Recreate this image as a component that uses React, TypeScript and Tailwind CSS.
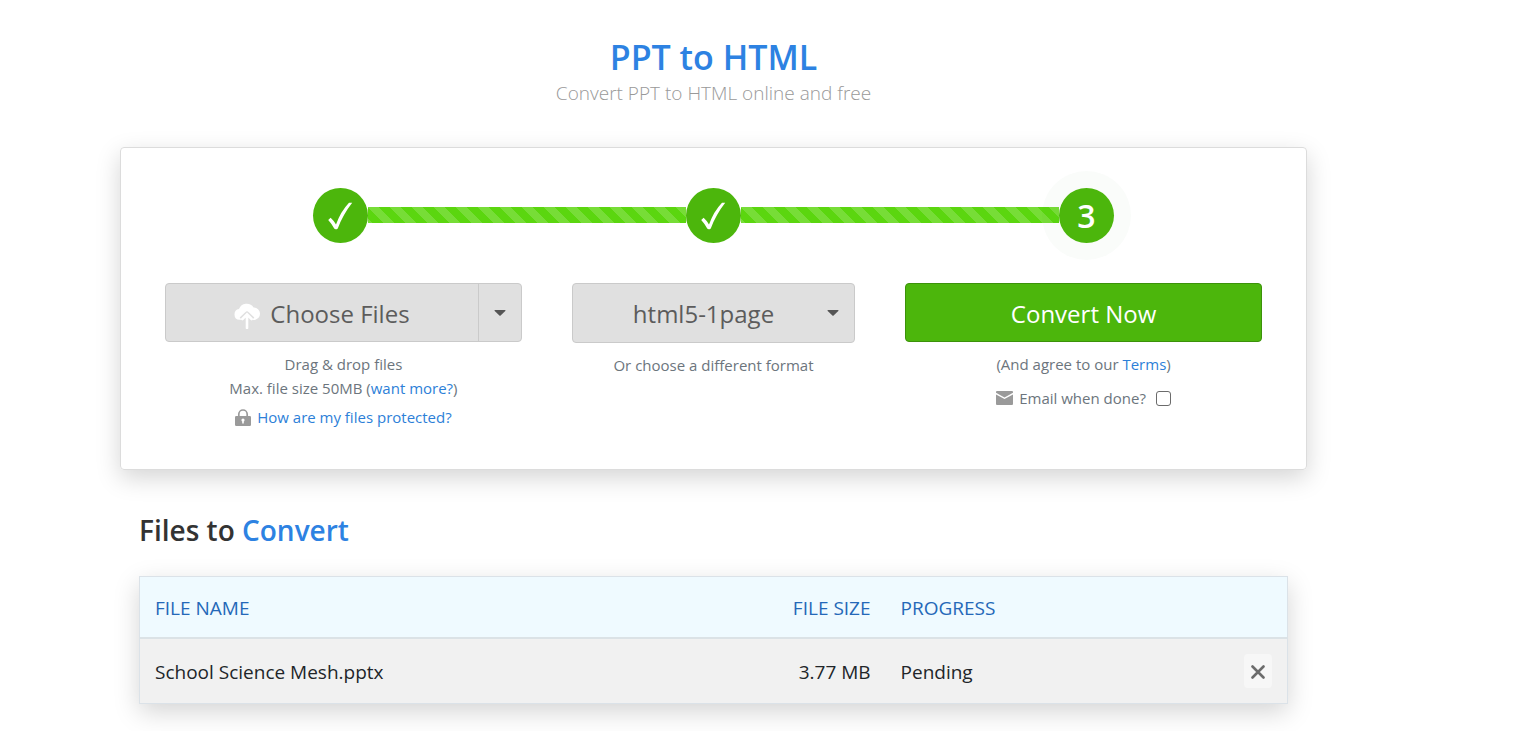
import { useState } from 'react';

interface QueuedFile {
  name: string;
  size: string;
  status: string;
}

const formats = ['html5-1page', 'html4', 'html5', 'pdf', 'png'];

const initialFiles: QueuedFile[] = [
  { name: 'School Science Mesh.pptx', size: '3.77 MB', status: 'Pending' },
];

const linkClass = 'text-[#2d7fd8] hover:underline';

function DoneStep() {
  return (
    <li className="flex size-[55px] shrink-0 items-center justify-center rounded-full bg-[#4cb60c]">
      <svg viewBox="0 0 55 55" className="size-full" role="img" aria-label="Done">
        <path
          d="M15.2 32 L17.6 29.8 Q20.8 32.6 23 36.6 Q27.6 23.6 36 14.8 L39.2 14.8 Q30 26.6 24.8 40.4 Q22.6 42 21.2 40.6 Q18.6 35.6 15.2 32 Z"
          fill="#fff"
        />
      </svg>
    </li>
  );
}

function StepBar() {
  return (
    <li
      aria-hidden="true"
      className="mb-px h-4 flex-1 bg-[#5bd60f] bg-[linear-gradient(45deg,rgba(255,255,255,0.17)_25%,transparent_25%,transparent_50%,rgba(255,255,255,0.17)_50%,rgba(255,255,255,0.17)_75%,transparent_75%,transparent)] bg-[length:22px_22px]"
    />
  );
}

function Caret() {
  return (
    <svg viewBox="0 0 12 6" className="h-[6px] w-3" fill="#555" aria-hidden="true">
      <path d="M0.8 0 H11.2 Q11.8 0.3 11.3 0.9 L6.6 5.6 Q6 6 5.4 5.6 L0.7 0.9 Q0.2 0.3 0.8 0 Z" />
    </svg>
  );
}

function CloudIcon() {
  return (
    <svg viewBox="0 0 26 26" className="mt-1 size-[26px]" aria-hidden="true">
      <path
        fill="#fff"
        d="M5.4 16.8 A5.4 5.4 0 0 1 5 6.1 A8.3 8.3 0 0 1 19.6 4.4 A6.4 6.4 0 0 1 26 10.6 Q26 15.4 21 16.9 Z"
      />
      <path
        d="M13 26 V12 M7.4 16.4 L13 11 L18.6 16.4"
        fill="none"
        stroke="#e0e0e0"
        strokeWidth="5"
        strokeLinejoin="round"
      />
      <path
        d="M13 25 V12 M8.4 16 L13 11.4 L17.6 16"
        fill="none"
        stroke="#fff"
        strokeWidth="2.6"
        strokeLinecap="round"
      />
    </svg>
  );
}

function LockIcon() {
  return (
    <svg viewBox="0 0 16 17" className="h-[17px] w-4" aria-hidden="true">
      <path d="M3.8 8 V5.2 A4.2 4.2 0 0 1 12.2 5.2 V8" fill="none" stroke="#9a9a9a" strokeWidth="1.7" />
      <rect y="7" width="16" height="10" rx="1.2" fill="#9a9a9a" />
      <circle cx="8" cy="11" r="1.6" fill="#fff" />
      <path d="M7.2 11 H8.8 V14.6 H7.2 Z" fill="#fff" />
    </svg>
  );
}

function MailIcon() {
  return (
    <svg viewBox="0 0 17 14" className="h-[14px] w-[17px]" fill="#9a9a9a" aria-hidden="true">
      <path d="M1 0 H16 Q17 0 17 1 V1.8 L8.5 6.4 L0 1.8 V1 Q0 0 1 0 Z" />
      <path d="M0 3.4 L8.5 8 L17 3.4 V13 Q17 14 16 14 H1 Q0 14 0 13 Z" />
    </svg>
  );
}

export default function App() {
  const [files, setFiles] = useState(initialFiles);
  const [format, setFormat] = useState(formats[0]);
  const [notify, setNotify] = useState(false);

  const removeFile = (name: string) => {
    setFiles(prev => prev.filter(file => file.name !== name));
  };

  return (
    <main className="min-h-screen bg-white pt-9 pr-52 pb-6 pl-30 font-['Open_Sans','Noto_Sans',sans-serif] text-[#212529]">
      <header className="text-center">
        <h1 className="text-[34px] leading-[42px] font-semibold text-[#2d82e2]">PPT to HTML</h1>
        <p className="text-[19px] leading-[30px] font-light text-[#999]">Convert PPT to HTML online and free</p>
      </header>

      <section className="mt-[39px] rounded border border-[#dcdcdc] px-11 pt-10 pb-10 shadow-[0_8px_24px_rgba(0,0,0,0.17)]">
        <ol className="flex items-center px-[148px]">
          <DoneStep />
          <StepBar />
          <DoneStep />
          <StepBar />
          <li className="flex size-[55px] shrink-0 items-center justify-center rounded-full bg-[#4cb60c] text-[32px] leading-none font-semibold text-white shadow-[0_0_0_17px_rgba(60,140,60,0.025)]">
            3
          </li>
        </ol>

        <div className="mt-10 grid grid-cols-[1.26fr_1fr_1.26fr] gap-[50px] text-center text-[15px] leading-6 text-[#6c757d]">
          <div>
            <div className="flex h-[59px] rounded border border-[#cacaca] bg-[#e0e0e0] text-[#5c5c5c]">
              <button className="flex flex-1 items-center justify-center gap-[10px] pt-0.5 text-2xl">
                <CloudIcon />
                Choose Files
              </button>
              <button aria-label="More sources" className="flex w-[43px] items-center justify-center border-l border-[#cacaca]">
                <Caret />
              </button>
            </div>
            <p className="mt-[10px]">Drag &amp; drop files</p>
            <p>
              Max. file size 50MB (<a href="#pricing" className={linkClass}>want more?</a>)
            </p>
            <p className="mt-[5px] flex items-center justify-center gap-[6px]">
              <LockIcon />
              <a href="#security" className={linkClass}>How are my files protected?</a>
            </p>
          </div>

          <div>
            <div className="relative">
              <select
                aria-label="Output format"
                value={format}
                onChange={(e) => setFormat(e.target.value)}
                className="h-[60px] w-full appearance-none rounded border border-[#cacaca] bg-[#e0e0e0] pt-0.5 pr-9 pl-4 text-2xl text-[#5c5c5c] [text-align-last:center]"
              >
                {formats.map(item => (
                  <option key={item}>{item}</option>
                ))}
              </select>
              <span className="pointer-events-none absolute inset-y-0 right-4 flex items-center">
                <Caret />
              </span>
            </div>
            <p className="mt-[10px]">Or choose a different format</p>
          </div>

          <div>
            <button className="h-[59px] w-full rounded border border-[#3c920a] bg-[#4cb60c] pt-0.5 text-2xl text-white">
              Convert Now
            </button>
            <p className="mt-[10px]">
              (And agree to our <a href="#terms" className={linkClass}>Terms</a>)
            </p>
            <label className="mt-[10px] flex items-center justify-center">
              <MailIcon />
              <span className="mr-[10px] ml-[6px]">Email when done?</span>
              <input
                type="checkbox"
                checked={notify}
                onChange={(e) => setNotify(e.target.checked)}
                className="size-[15px] appearance-none rounded-[3px] border border-[#6b6b6b] bg-white checked:bg-[#2d82e2]"
              />
            </label>
          </div>
        </div>
      </section>

      <section className="mx-[19px] mt-10">
        <h2 className="text-[28px] leading-10 font-semibold text-[#333]">
          Files to <span className="text-[#2d82e2]">Convert</span>
        </h2>
        <table className="mt-[26px] w-full border-collapse border border-[#dbe2e8] text-[19px] shadow-[0_8px_24px_rgba(0,0,0,0.17)]">
          <thead>
            <tr className="h-[61px] border-b-2 border-[#dbe2e6] bg-[#effaff] text-[#2468b8]">
              <th className="px-[15px] pt-0.5 text-left font-normal">FILE NAME</th>
              <th className="w-[108px] px-[15px] pt-0.5 text-right font-normal whitespace-nowrap">FILE SIZE</th>
              <th className="w-[27%] px-[15px] pt-0.5 text-left font-normal">PROGRESS</th>
              <th className="w-[92px]" aria-label="Remove" />
            </tr>
          </thead>
          <tbody>
            {files.map(file => (
              <tr key={file.name} className="h-[66px] bg-[#f1f1f1]">
                <td className="px-[15px] pt-0.5">{file.name}</td>
                <td className="px-[15px] pt-0.5 text-right whitespace-nowrap">{file.size}</td>
                <td className="px-[15px] pt-0.5">{file.status}</td>
                <td className="px-[15px]">
                  <button
                    aria-label={`Remove ${file.name}`}
                    onClick={() => removeFile(file.name)}
                    className="ml-auto flex h-[34px] w-7 items-center justify-center rounded-sm bg-[#f7f7f7] pt-0.5"
                  >
                    <svg viewBox="0 0 14 14" className="size-[14px]" aria-hidden="true">
                      <path d="M1.5 1.5 L12.5 12.5 M12.5 1.5 L1.5 12.5" stroke="#6c6c6c" strokeWidth="2.6" strokeLinecap="round" />
                    </svg>
                  </button>
                </td>
              </tr>
            ))}
          </tbody>
        </table>
      </section>
    </main>
  );
}
